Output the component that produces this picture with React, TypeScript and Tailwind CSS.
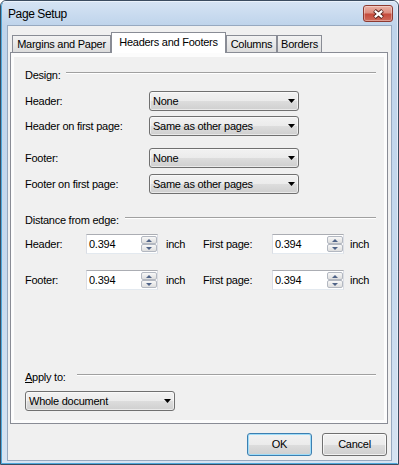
import React from "react";

function Select({ value, w }: { value: string; w: string }) {
  return (
    <div
      className={`${w} h-[20px] flex items-center justify-between rounded-[3px] border border-[#707070] bg-[linear-gradient(to_bottom,#f2f2f2_0%,#ebebeb_50%,#dddddd_50%,#cfcfcf_100%)] pl-[3px] pr-[3px] shadow-[inset_0_0_0_1px_rgba(255,255,255,0.55)]`}
    >
      <span>{value}</span>
      <svg width="7" height="4" viewBox="0 0 7 4">
        <path d="M0 0H7L3.5 4Z" fill="#000" />
      </svg>
    </div>
  );
}

function SpinBtn({ up }: { up?: boolean }) {
  return (
    <div className="h-[8px] flex items-center justify-center border border-[#b3b8c1] rounded-[2px] bg-[linear-gradient(to_bottom,#f8f8f8,#dedede)]">
      <svg width="6" height="3" viewBox="0 0 6 3">
        <path d={up ? "M0 3H6L3 0Z" : "M0 0H6L3 3Z"} fill="#4f6387" />
      </svg>
    </div>
  );
}

function Spin() {
  return (
    <div className="w-[72px] h-[20px] flex items-stretch border border-[#abadb3] border-l-[#dadde4] border-r-[#dadde4] border-b-[#e3e9ef] bg-white">
      <div className="flex-1 pl-[2px] flex items-center">0.394</div>
      <div className="w-[16px] flex flex-col py-[1px]">
        <SpinBtn up />
        <SpinBtn />
      </div>
    </div>
  );
}

function Etched({ ml, mb }: { ml: string; mb: string }) {
  return (
    <div
      className={`${ml} ${mb} flex-1 h-[2px] border-t border-t-[#a0a0a0] border-b border-b-white`}
    />
  );
}

function CloseBtn() {
  return (
    <div className="mt-[3px] w-[30px] h-[17px] flex items-center justify-center rounded-[3px] border border-[#8e3a30] bg-[linear-gradient(to_bottom,#ebb1a5_0%,#dc8e80_45%,#c54a3b_55%,#cf6b5b_100%)] shadow-[inset_0_0_0_1px_rgba(255,255,255,0.35)]">
      <svg width="13" height="10" viewBox="0 0 13 10">
        <path d="M2.5 1.5L10.5 8.5M10.5 1.5L2.5 8.5" stroke="#4a1a14" strokeWidth="4" />
        <path d="M2.8 1.8L10.2 8.2M10.2 1.8L2.8 8.2" stroke="#ffffff" strokeWidth="2.2" />
      </svg>
    </div>
  );
}

export default function App() {
  return (
    <div className="w-[399px] h-[465px] border border-[#3b4c60] rounded-t-[6px] bg-[linear-gradient(to_bottom,#d6e4f4_0px,#bfd4eb_24px,#c6d9ee_60%,#d6e3f2_100%)] font-['Liberation_Sans',Arial,sans-serif] text-[11px] tracking-[-0.25px] text-black overflow-hidden">
      <div className="h-full flex flex-col border border-l-[#4fa9dc] border-b-[#4fa9dc] border-t-[#eaf2fb] border-r-[#e2ecf7] rounded-t-[5px]">
        {/* title bar */}
        <div className="h-[23px] flex items-start justify-between pl-[6px] pr-[4px]">
          <span className="mt-[1px] text-[12px] tracking-[-0.4px] leading-[23px]">Page Setup</span>
          <CloseBtn />
        </div>

        {/* client */}
        <div className="flex-1 mx-[5px] mb-[2px] border border-[#97a9c0] bg-[#f0f0f0] flex flex-col">
          {/* tabs */}
          <div className="mt-[6px] ml-[4px] h-[20px] flex items-end">
            <div className="w-[99px] h-[17px] border border-b-0 border-[#898c95] bg-[linear-gradient(to_bottom,#f3f3f3,#e8e8e8_50%,#dcdcdc)] text-center leading-[16px]">
              Margins and Paper
            </div>
            <div className="w-[115px] h-[21px] -mb-px relative z-10 border border-b-0 border-[#898c95] bg-white text-center leading-[19px]">
              Headers and Footers
            </div>
            <div className="w-[51px] h-[17px] border border-b-0 border-[#898c95] bg-[linear-gradient(to_bottom,#f3f3f3,#e8e8e8_50%,#dcdcdc)] text-center leading-[16px]">
              Columns
            </div>
            <div className="w-[45px] h-[17px] border border-b-0 border-[#898c95] bg-[linear-gradient(to_bottom,#f3f3f3,#e8e8e8_50%,#dcdcdc)] text-center leading-[16px]">
              Borders
            </div>
          </div>

          {/* panel */}
          <div className="ml-[2px] w-[378px] h-[372px] border border-[#898c95] bg-[#fcfcfc] pt-[4px] pl-[3px] pr-[3px] pb-[3px] flex flex-col">
            <div className="flex-1 bg-[#f0f0f0] flex flex-col pl-[11px] pr-[8px]">
              <div className="mt-[8px] h-[20px] flex items-center">
                <span>Design:</span>
                <Etched ml="ml-[5px]" mb="mb-[5px]" />
              </div>

              <div className="mt-[6px] h-[20px] flex items-center">
                <span className="w-[124px]">Header:</span>
                <Select w="w-[150px]" value="None" />
              </div>
              <div className="mt-[5px] h-[20px] flex items-center">
                <span className="w-[124px]">Header on first page:</span>
                <Select w="w-[150px]" value="Same as other pages" />
              </div>
              <div className="mt-[12px] h-[20px] flex items-center">
                <span className="w-[124px]">Footer:</span>
                <Select w="w-[150px]" value="None" />
              </div>
              <div className="mt-[6px] h-[20px] flex items-center">
                <span className="w-[124px]">Footer on first page:</span>
                <Select w="w-[150px]" value="Same as other pages" />
              </div>

              <div className="mt-[16px] h-[20px] flex items-center">
                <span>Distance from edge:</span>
                <Etched ml="ml-[6px]" mb="mb-[5px]" />
              </div>

              <div className="mt-[4px] h-[20px] flex items-center">
                <span className="w-[61px]">Header:</span>
                <Spin />
                <span className="ml-[8px] w-[37px]">inch</span>
                <span className="w-[69px]">First page:</span>
                <Spin />
                <span className="ml-[6px]">inch</span>
              </div>
              <div className="mt-[16px] h-[20px] flex items-center">
                <span className="w-[61px]">Footer:</span>
                <Spin />
                <span className="ml-[8px] w-[37px]">inch</span>
                <span className="w-[69px]">First page:</span>
                <Spin />
                <span className="ml-[6px]">inch</span>
              </div>

              <div className="mt-[77px] h-[20px] flex items-center">
                <span>
                  <span className="underline">A</span>pply to:
                </span>
                <Etched ml="ml-[11px]" mb="mb-[5px]" />
              </div>
              <div className="mt-[4px] h-[20px] flex items-center">
                <Select w="w-[150px]" value="Whole document" />
              </div>
            </div>
          </div>

          {/* buttons */}
          <div className="mt-[9px] h-[23px] flex justify-end gap-[10px] pr-[4px]">
            <div className="w-[65px] h-[23px] flex items-center justify-center rounded-[3px] border border-[#3c7fb1] bg-[linear-gradient(to_bottom,#f2f2f2_0%,#ebebeb_50%,#dddddd_50%,#cfcfcf_100%)] shadow-[inset_0_0_0_1px_#9fdcf8]">
              OK
            </div>
            <div className="w-[65px] h-[23px] flex items-center justify-center rounded-[3px] border border-[#707070] bg-[linear-gradient(to_bottom,#f2f2f2_0%,#ebebeb_50%,#dddddd_50%,#cfcfcf_100%)] shadow-[inset_0_0_0_1px_rgba(255,255,255,0.7)]">
              Cancel
            </div>
          </div>
        </div>
      </div>
    </div>
  );
}
